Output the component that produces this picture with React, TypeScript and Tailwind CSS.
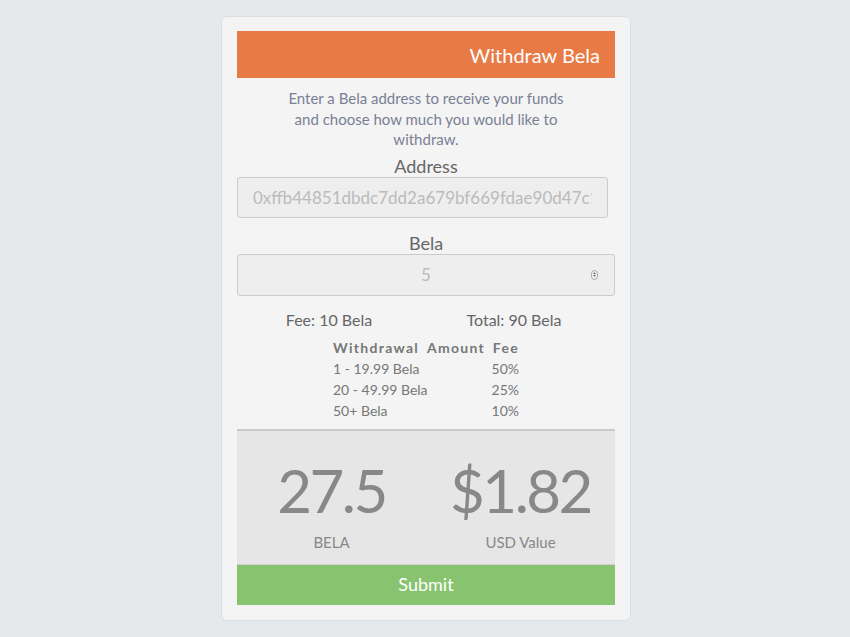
import React, { useState } from "react";

const fees = [
  { range: "1 - 19.99 Bela", pct: "50%" },
  { range: "20 - 49.99 Bela", pct: "25%" },
  { range: "50+ Bela", pct: "10%" },
];

const App: React.FC = () => {
  const [address, setAddress] = useState("0xffb44851dbdc7dd2a679bf669fdae90d47c1a6e2");
  const [amount, setAmount] = useState("5");

  return (
    <div className="min-h-screen w-full bg-[#e6e9ec] pt-4 pl-[2px] font-['Lato',sans-serif]">
      <div className="mx-auto w-[410px] rounded-md border border-[#dcdfe2] bg-[#f4f4f4] px-[15px] pt-[14px] pb-[15px]">
        <div className="flex h-[47px] items-center justify-end bg-[#e87b45] pr-[15px]">
          <h1 className="text-[20px] text-white">Withdraw Bela</h1>
        </div>

        <p className="mx-auto mt-[10px] w-[300px] text-center text-[15px] leading-[20.5px] text-[#7a7f95]">
          Enter a Bela address to receive your funds and choose how much you would like to withdraw.
        </p>

        <label className="mt-[5px] block text-center text-[18px] leading-[22px] text-[#666]">Address</label>
        <input
          className="h-[41px] w-[371px] rounded-[3px] border border-[#ccc] bg-[#eeeeee] px-[15px] text-[17px] text-[#bbb] outline-none"
          value={address}
          onChange={(e) => setAddress(e.target.value)}
        />

        <label className="mt-[14px] block text-center text-[18px] leading-[22px] text-[#666]">Bela</label>
        <div className="relative">
          <input
            type="number"
            className="h-[42px] w-full rounded-[3px] border border-[#ccc] bg-[#eeeeee] px-[15px] text-center text-[17px] text-[#bbb] outline-none [appearance:textfield] [&::-webkit-inner-spin-button]:appearance-none"
            value={amount}
            onChange={(e) => setAmount(e.target.value)}
          />
          <span className="pointer-events-none absolute right-[17px] top-1/2 flex h-[10px] w-[7px] -translate-y-1/2 items-center justify-center rounded-full border border-[#aaa]">
            <svg width="5" height="7" viewBox="0 0 5 7">
              <path d="M1 3 L2.5 1.2 L4 3 Z M1 4 L2.5 5.8 L4 4 Z" fill="#666" />
            </svg>
          </span>
        </div>

        <div className="mt-[14px] flex text-[16px] leading-[20px] text-[#666]">
          <div className="w-1/2 pr-[5px] text-center">Fee: 10 Bela</div>
          <div className="w-1/2 pr-[13px] text-center">Total: 90 Bela</div>
        </div>

        <div className="mx-auto mt-[7px] w-[186px] text-[14px] leading-[21px] text-[#777]">
          <div className="flex justify-between font-bold tracking-[1.3px]">
            <span>Withdrawal</span>
            <span>Amount</span>
            <span>Fee</span>
          </div>
          {fees.map((f) => (
            <div key={f.range} className="flex justify-between">
              <span>{f.range}</span>
              <span>{f.pct}</span>
            </div>
          ))}
        </div>

        <div className="mt-[8px] border-t-2 border-[#cacaca] bg-[#e6e6e6]">
          <div className="flex pt-[22px] pb-[13px] text-[#888]">
            <div className="flex w-1/2 flex-col items-center">
              <span className="text-[60px] leading-[74px] tracking-[-2.5px]">27.5</span>
              <span className="mt-[6px] text-[15px] leading-[18px]">BELA</span>
            </div>
            <div className="flex w-1/2 flex-col items-center">
              <span className="text-[60px] leading-[74px] tracking-[-2.5px]">$1.82</span>
              <span className="mt-[6px] text-[15px] leading-[18px]">USD Value</span>
            </div>
          </div>
          <button className="flex h-[41px] w-full items-center justify-center border-t border-[#cfcfcf] bg-[#88c46f] text-[18px] text-white">
            Submit
          </button>
        </div>
      </div>
    </div>
  );
};

export default App;
